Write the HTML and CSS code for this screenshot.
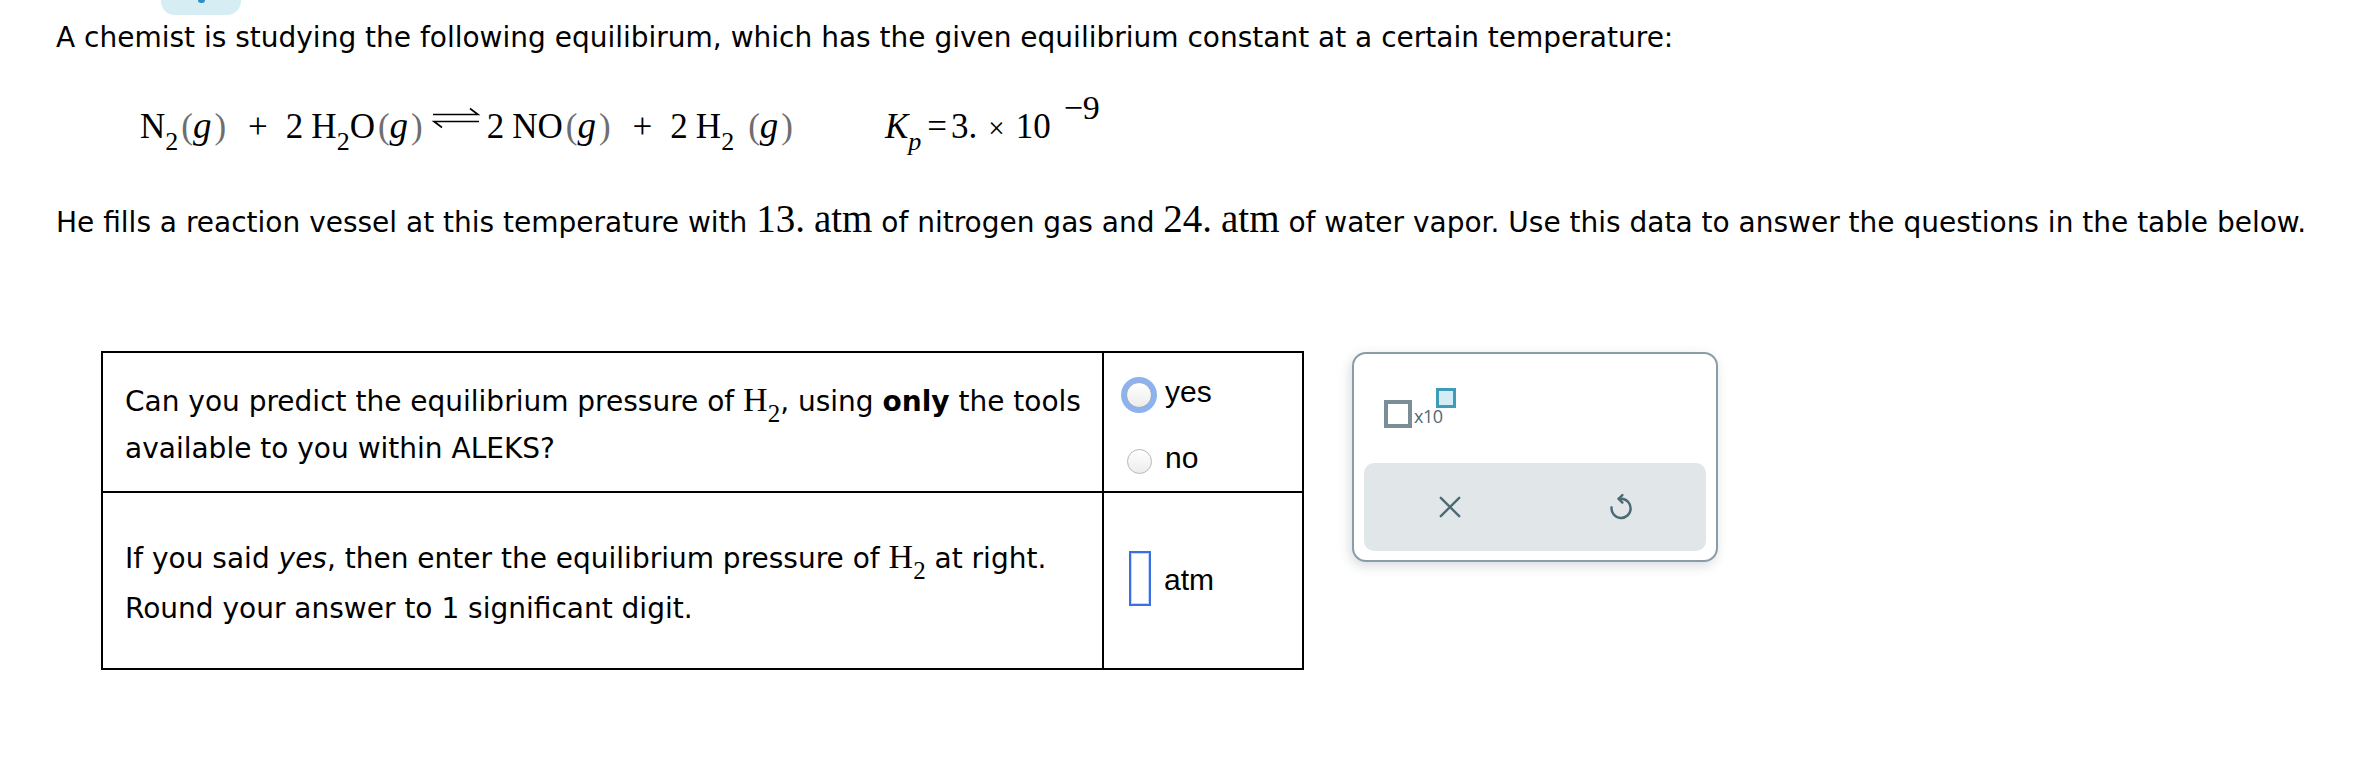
FILE: index.html
```html
<!DOCTYPE html>
<html lang="en">
<head>
<meta charset="utf-8">
<title>Equilibrium question</title>
<link rel="stylesheet" href="styles.css">
</head>
<body>
<div class="page">
  <div class="tab"><span class="tab-mark"></span></div>

  <p class="intro">A chemist is studying the following equilibirum, which has the given equilibrium constant at a certain temperature:</p>

  <div class="equation"><span class="chem"><span class="el">N</span><span class="sb">2</span><span class="pr pr-l">(</span><i class="ph">g</i><span class="pr pr-r">)</span><span class="plus">+</span><span class="co">2</span><span class="el">H</span><span class="sb">2</span><span class="el">O</span><span class="pr pr-l">(</span><i class="ph">g</i><span class="pr pr-r">)</span><svg class="arrows" viewBox="0 0 50 22" width="50" height="22" aria-hidden="true"><path d="M2 7.5 H47 L39 1.5" fill="none" stroke="#000" stroke-width="1.6"/><path d="M48 14.5 H3 L11 20.5" fill="none" stroke="#000" stroke-width="1.6"/></svg><span class="co">2</span><span class="el">NO</span><span class="pr pr-l">(</span><i class="ph">g</i><span class="pr pr-r">)</span><span class="plus">+</span><span class="co">2</span><span class="el">H</span><span class="sb">2</span><span class="pr pr-l pr-gap">(</span><i class="ph">g</i><span class="pr pr-r">)</span></span><span class="kp"><i class="kk">K</i><i class="ksub">p</i><span class="eq">=</span>3.<span class="times">×</span>10<span class="sup">−9</span></span></div>

  <p class="data">He fills a reaction vessel at this temperature with <span class="num">13.</span> <span class="num">atm</span> of nitrogen gas and <span class="num">24.</span> <span class="num">atm</span> of water vapor. Use this data to answer the questions in the table below.</p>

  <div class="work">
    <table class="qtable">
      <tr class="r1">
        <td class="q">Can you predict the equilibrium pressure of <span class="mh">H<span class="msub">2</span></span>, using <b>only</b> the tools<br>available to you within ALEKS?</td>
        <td class="a">
          <div class="choices">
            <label class="choice"><span class="radio radio-focus"><span class="radio-in"></span></span><span class="lbl">yes</span></label>
            <label class="choice choice-no"><span class="radio"><span class="radio-in"></span></span><span class="lbl">no</span></label>
          </div>
        </td>
      </tr>
      <tr class="r2">
        <td class="q">If you said <i>yes</i>, then enter the equilibrium pressure of <span class="mh">H<span class="msub">2</span></span> at right.<br>Round your answer to 1 significant digit.</td>
        <td class="a">
          <div class="answer"><span class="inbox"></span><span class="lbl">atm</span></div>
        </td>
      </tr>
    </table>

    <div class="toolbar">
      <div class="sci">
        <span class="sci-box"></span><span class="sci-x">x10</span><span class="sci-exp"></span>
      </div>
      <div class="actions">
        <div class="act">
          <svg viewBox="0 0 24 24" width="26" height="26" aria-hidden="true"><path d="M3.5 3.5 L20.5 20.5 M20.5 3.5 L3.5 20.5" fill="none" stroke="#4b6a75" stroke-width="2.2" stroke-linecap="round"/></svg>
        </div>
        <div class="act">
          <svg viewBox="0 0 24 24" width="28" height="28" aria-hidden="true"><path d="M10 5 H12 A8.2 8.2 0 1 1 3.9 12.3" fill="none" stroke="#4b6a75" stroke-width="2.1" stroke-linecap="round"/><path d="M13.2 1.8 L10 5 L13.2 8.2" fill="none" stroke="#4b6a75" stroke-width="2.1" stroke-linecap="round" stroke-linejoin="round"/></svg>
        </div>
      </div>
    </div>
  </div>
</div>
</body>
</html>
```

FILE: styles.css
```css
* { box-sizing: border-box; }

body {
  margin: 0;
  background: #fff;
  color: #000;
  font-family: "DejaVu Sans", Verdana, sans-serif;
  font-size: 28px;
}

.page {
  padding-left: 56px;
}

.tab {
  margin-left: 105px;
  width: 80px;
  height: 15px;
  background: #d5edf3;
  border-radius: 0 0 14px 14px;
  display: flex;
  justify-content: center;
}

.tab-mark {
  width: 7px;
  height: 3px;
  background: #2b8fc4;
  border-radius: 0 0 3px 3px;
}

.intro {
  margin: 6px 0 0;
  line-height: 34px;
}

/* ---------- equation ---------- */
.equation {
  margin-top: 46px;
  padding-left: 84px;
  height: 50px;
  line-height: 50px;
  font-family: "Liberation Serif", "Times New Roman", serif;
  font-size: 35px;
  white-space: nowrap;
}

.sb {
  font-size: 26px;
  line-height: 0;
  vertical-align: -12px;
}

.pr {
  color: #6e6e6e;
}

.pr-l { margin-left: 3px; }
.pr-r { margin-left: 3px; }
.pr-gap { margin-left: 14px; }

.ph {
  font-style: italic;
  font-size: 37px;
}

.plus {
  margin: 0 18px 0 22px;
}

.co { margin-right: 8px; }

.arrows {
  vertical-align: 9px;
  margin: 0 6px 0 8px;
}

.kp {
  margin-left: 92px;
}

.kk { font-style: italic; }

.ksub {
  font-style: italic;
  font-size: 26px;
  line-height: 0;
  vertical-align: -12px;
}

.eq { margin: 0 4px 0 6px; }

.times { margin: 0 11px; font-size: 29px; }

.sup {
  font-size: 34px;
  line-height: 0;
  vertical-align: 19px;
  margin-left: 13px;
}

/* ---------- data line ---------- */
.data {
  margin: 55px 0 0;
  line-height: 34px;
}

.num {
  font-family: "Liberation Serif", "Times New Roman", serif;
  font-size: 39px;
  line-height: 0;
}

/* ---------- table ---------- */
.work {
  display: flex;
  align-items: flex-start;
  margin-top: 111px;
}

.qtable {
  margin-left: 45px;
  border-collapse: collapse;
}

.qtable td {
  border: 2px solid #000;
  padding: 0;
  vertical-align: middle;
}

.q {
  width: 1001px;
  padding: 6px 0 0 22px !important;
  line-height: 47px;
  white-space: nowrap;
}

.r2 .q { line-height: 50px; }

.r1 td { height: 140px; }
.r2 td { height: 177px; }

.mh {
  font-family: "Liberation Serif", "Times New Roman", serif;
  font-size: 34px;
  line-height: 0;
}

.msub {
  font-size: 25px;
  line-height: 0;
  vertical-align: -11px;
}

.a {
  width: 200px;
}

.choices {
  display: flex;
  flex-direction: column;
  gap: 31px;
  padding: 12px 0 0 17px;
}

.choice {
  display: flex;
  align-items: center;
}

.lbl {
  font-family: "Liberation Sans", Helvetica, Arial, sans-serif;
  font-size: 30px;
  line-height: 36px;
}

.radio {
  width: 36px;
  height: 36px;
  display: flex;
  align-items: center;
  justify-content: center;
  margin-right: 8px;
  border-radius: 50%;
}

.radio-focus {
  background: #8db2f0;
}

.radio-in {
  width: 25px;
  height: 25px;
  border-radius: 50%;
  border: 1px solid #b9b9b9;
  background: linear-gradient(#ffffff, #ececec);
}

.radio-focus .radio-in {
  width: 26px;
  height: 26px;
  border-color: #9aa7bd;
}

.choice .lbl { margin-top: -6px; }
.choice-no .lbl { margin-top: -8px; }

.answer {
  display: flex;
  align-items: center;
  padding: 0 0 4px 25px;
}

.inbox {
  width: 22px;
  height: 55px;
  border: 2px solid #3b6fe4;
  box-shadow: inset 0 0 0 1px #c7d6f8;
  background: #fff;
  margin-right: 13px;
}

.answer .lbl { margin-top: 3px; }

/* ---------- toolbar ---------- */
.toolbar {
  margin-left: 48px;
  margin-top: 1px;
  width: 366px;
  height: 210px;
  border: 2px solid #8a9da6;
  border-radius: 14px;
  background: #fff;
  box-shadow: -2px 4px 12px rgba(40, 60, 70, 0.18);
  padding: 0 10px 9px 10px;
  display: flex;
  flex-direction: column;
  justify-content: space-between;
}

.sci {
  display: flex;
  align-items: flex-start;
  margin: 34px 0 0 20px;
}

.sci-box {
  width: 28px;
  height: 28px;
  border: 4px solid #7b8e97;
  margin-top: 12px;
}

.sci-x {
  font-family: "Open Sans", "Liberation Sans", sans-serif;
  font-size: 18px;
  line-height: 18px;
  letter-spacing: -0.5px;
  color: #4e6b76;
  margin: 19px 0 0 2px;
}

.sci-exp {
  width: 20px;
  height: 20px;
  border: 3px solid #3d9cb8;
  background: #d4ecf3;
  margin-left: -7px;
}

.actions {
  height: 88px;
  background: #e1e6e9;
  border-radius: 10px;
  display: flex;
}

.act {
  flex: 1;
  display: flex;
  align-items: center;
  justify-content: center;
}
```
